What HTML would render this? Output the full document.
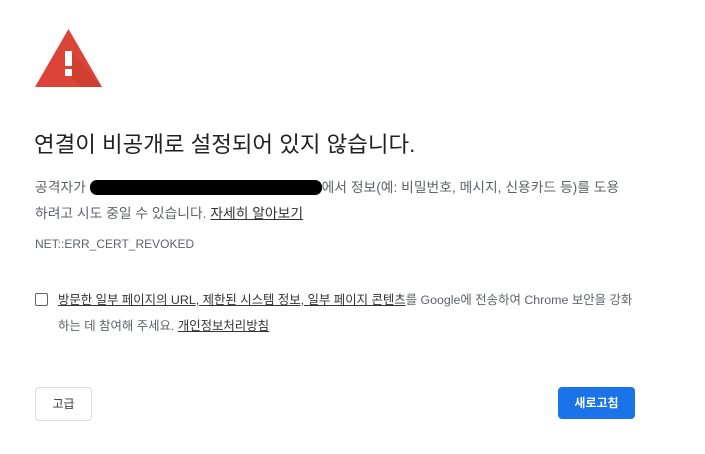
<!DOCTYPE html>
<html><head><meta charset="utf-8"><style>
body{margin:0;background:#fff;width:705px;height:454px;overflow:hidden;font-family:"Liberation Sans","Noto Sans CJK KR",sans-serif;color:#333;position:relative}
.a{position:absolute;white-space:nowrap}
u{text-decoration:underline;color:#333}
</style></head><body>
<svg class="a" style="left:35px;top:29px" width="67" height="58" viewBox="0 0 67 58">
<polygon points="33.5,0 67,58 0,58" fill="#db4437"/>
<polygon points="38,24 67,58 45,58 34,45" fill="#c53929" opacity="0.5"/>
<rect x="30" y="22" width="7" height="15" fill="#fff"/>
<rect x="30" y="40" width="7" height="7" fill="#fff"/>
</svg>
<div class="a" style="left:34px;top:127px;font-size:22.4px;color:#202124">연결이 비공개로 설정되어 있지 않습니다.</div>
<div class="a" style="left:35px;top:175px;font-size:13.8px;line-height:26px;color:#5f6368">공격자가 <span style="display:inline-block;width:232px;height:15px;background:#000;border-radius:7px;vertical-align:-3px"></span>에서 정보(예: 비밀번호, 메시지, 신용카드 등)를 도용<br>하려고 시도 중일 수 있습니다. <u>자세히 알아보기</u></div>
<div class="a" style="left:35px;top:237px;font-size:12px;color:#5f6368">NET::ERR_CERT_REVOKED</div>
<div class="a" style="left:35px;top:293px;width:11px;height:11px;border:1px solid #5f6368;border-radius:2px"></div>
<div class="a" style="left:58px;top:287px;font-size:12.4px;line-height:26px;color:#5f6368"><u>방문한 일부 페이지의 URL, 제한된 시스템 정보, 일부 페이지 콘텐츠</u>를 Google에 전송하여 Chrome 보안을 강화<br>하는 데 참여해 주세요. <u>개인정보처리방침</u></div>
<div class="a" style="left:35px;top:387px;width:55px;height:32px;border:1px solid #dadce0;border-radius:4px;font-size:12px;line-height:32px;text-align:center;color:#333">고급</div>
<div class="a" style="left:558px;top:387px;width:77px;height:32px;background:#1a73e8;border-radius:4px;font-size:12px;line-height:32px;text-align:center;color:#fff;font-weight:bold">새로고침</div>
</body></html>
